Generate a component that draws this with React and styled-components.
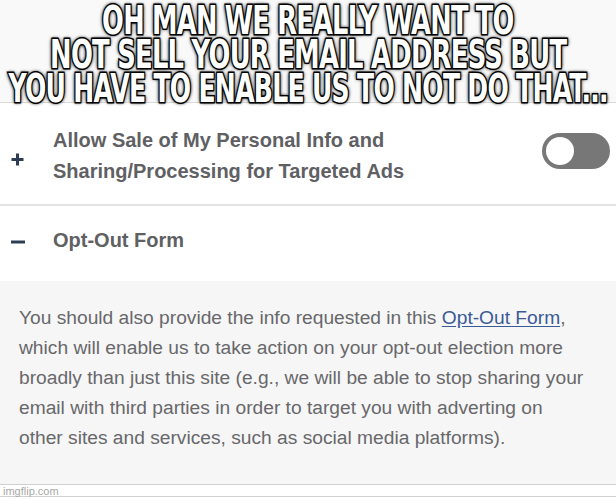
import React from "react"
import styled, { createGlobalStyle } from "styled-components"

const GlobalStyle = createGlobalStyle`
  body {
    margin: 0;
    background: #ffffff;
  }
`

const Page = styled.div`
  width: 616px;
  height: 500px;
  overflow: hidden;
  display: flex;
  flex-direction: column;
  background: #ffffff;
`

const Caption = styled.div`
  position: relative;
  z-index: 2;
  height: 102px;
  padding-top: 4px;
  box-sizing: border-box;
  display: flex;
  flex-direction: column;
  align-items: center;
  background: #f9f9f9;
`

const CaptionLine = styled.div`
  font-family: "DejaVu Sans Condensed", "DejaVu Sans", sans-serif;
  font-weight: 700;
  font-size: 39px;
  line-height: 34px;
  height: 34px;
  letter-spacing: -1px;
  color: #ffffff;
  white-space: nowrap;
  transform: scaleX(${ p => p.squeeze });
  -webkit-text-stroke: 3px #000;
  paint-order: stroke fill;
  text-shadow: 0 0 3px #000, 0 0 4px #000, 0 0 5px rgba(0, 0, 0, 0.8);
`

const Shot = styled.div`
  flex: 1;
  display: flex;
  flex-direction: column;
  border-top: 1px solid #d9d9d9;
  background: #ffffff;
`

const Row = styled.div`
  height: ${ p => p.h }px;
  display: flex;
  align-items: center;
  border-bottom: ${ p => p.divider ? "2px solid #e2e2e2" : "none" };
  box-sizing: border-box;
  padding-right: 6px;
`

const IconCell = styled.div`
  width: 53px;
  flex: none;
  display: flex;
  padding-left: 10px;
  box-sizing: border-box;
  margin-top: ${ p => p.offset || 0 }px;
`

const Heading = styled.div`
  flex: 1;
  font-family: "Liberation Sans Narrow", "Liberation Sans", sans-serif;
  font-weight: 700;
  font-size: 20px;
  line-height: 31px;
  color: #5f6063;
  margin-top: ${ p => p.offset || 0 }px;
`

const Toggle = styled.div`
  width: 68px;
  height: 36px;
  border-radius: 18px;
  background: #777777;
  display: flex;
  align-items: center;
  padding: 0 4px;
  box-sizing: border-box;
  align-self: flex-start;
  margin-top: 30px;
`

const Knob = styled.div`
  width: 28px;
  height: 28px;
  border-radius: 50%;
  background: #ffffff;
`

const Panel = styled.div`
  height: 203px;
  background: #f6f6f7;
  padding: 22px 19px 0;
  box-sizing: border-box;
  margin-top: 4px;
`

const Body = styled.p`
  margin: 0;
  font-family: "Liberation Sans Narrow", "Liberation Sans", sans-serif;
  font-size: 19.2px;
  line-height: 30px;
  color: #68686a;
  white-space: nowrap;
`

const Link = styled.a`
  color: #3a5a96;
  text-decoration: underline;
  text-underline-offset: 2px;
`

const Footer = styled.div`
  border-top: 1px solid #d0d0d0;
  border-bottom: 1px solid #d0d0d0;
  height: 11px;
  padding-left: 3px;
  font-family: "Liberation Sans", Arial, sans-serif;
  font-size: 11px;
  line-height: 13px;
  color: #a8a8a8;
`

const PlusIcon = () => (
  <svg width="15" height="15" viewBox="0 0 15 15">
    <path d="M7.5 1.5v12M1.5 7.5h12" stroke="#2c3d55" strokeWidth="3" fill="none" />
  </svg>
)

const MinusIcon = () => (
  <svg width="16" height="6" viewBox="0 0 16 6">
    <path d="M1 3h14" stroke="#2c3d55" strokeWidth="3" fill="none" />
  </svg>
)

const captionLines = [
  { text: "OH MAN WE REALLY WANT TO", squeeze: 0.73 },
  { text: "NOT SELL YOUR EMAIL ADDRESS BUT", squeeze: 0.735 },
  { text: "YOU HAVE TO ENABLE US TO NOT DO THAT...", squeeze: 0.715 },
]

const App = () => (
  <Page>
    <GlobalStyle />
    <Caption>
      { captionLines.map(line =>
        <CaptionLine key={ line.text } squeeze={ line.squeeze }>{ line.text }</CaptionLine>
      ) }
    </Caption>
    <Shot>
      <Row h={ 103 } divider>
        <IconCell offset={ 12 }><PlusIcon /></IconCell>
        <Heading offset={ 4 }>
          Allow Sale of My Personal Info and<br />
          Sharing/Processing for Targeted Ads
        </Heading>
        <Toggle><Knob /></Toggle>
      </Row>
      <Row h={ 71 }>
        <IconCell><MinusIcon /></IconCell>
        <Heading offset={ -2 }>Opt-Out Form</Heading>
      </Row>
      <Panel>
        <Body>
          You should also provide the info requested in this <Link href="#">Opt-Out Form</Link>,<br />
          which will enable us to take action on your opt-out election more<br />
          broadly than just this site (e.g., we will be able to stop sharing your<br />
          email with third parties in order to target you with adverting on<br />
          other sites and services, such as social media platforms).
        </Body>
      </Panel>
      <Footer>imgflip.com</Footer>
    </Shot>
  </Page>
)

export default App
